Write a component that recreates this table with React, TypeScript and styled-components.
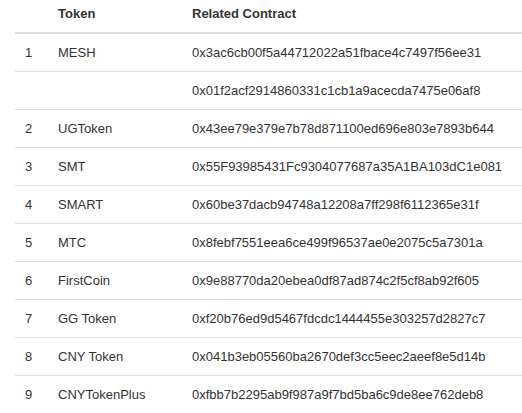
import React from "react";
import styled, { createGlobalStyle } from "styled-components";

const Global = createGlobalStyle`
  html, body { margin: 0; padding: 0; background: #fff; }
  body {
    font-family: "Liberation Sans", Arial, sans-serif;
    font-size: 13px;
    color: #333;
  }
`;

const Page = styled.div`
  padding-left: 15px;
  overflow: hidden;
`;

const Table = styled.table`
  width: 100%;
  table-layout: fixed;
  border-collapse: collapse;
  border-spacing: 0;
`;

const Th = styled.th<{ $w?: number }>`
  text-align: left;
  font-weight: bold;
  line-height: 21px;
  padding: 3px 8px 8px;
  border-bottom: 2px solid #ddd;
  white-space: nowrap;
  width: ${(p) => (p.$w ? `${p.$w}px` : "auto")};
  box-sizing: border-box;
`;

const Td = styled.td<{ $num?: boolean }>`
  line-height: 21px;
  padding: 8px 8px 8px ${(p) => (p.$num ? "10px" : "8px")};
  border-top: 1px solid #ddd;
  white-space: nowrap;
`;

const rows: [string, string, string][] = [
  ["1", "MESH", "0x3ac6cb00f5a44712022a51fbace4c7497f56ee31"],
  ["", "", "0x01f2acf2914860331c1cb1a9acecda7475e06af8"],
  ["2", "UGToken", "0x43ee79e379e7b78d871100ed696e803e7893b644"],
  ["3", "SMT", "0x55F93985431Fc9304077687a35A1BA103dC1e081"],
  ["4", "SMART", "0x60be37dacb94748a12208a7ff298f6112365e31f"],
  ["5", "MTC", "0x8febf7551eea6ce499f96537ae0e2075c5a7301a"],
  ["6", "FirstCoin", "0x9e88770da20ebea0df87ad874c2f5cf8ab92f605"],
  ["7", "GG Token", "0xf20b76ed9d5467fdcdc1444455e303257d2827c7"],
  ["8", "CNY Token", "0x041b3eb05560ba2670def3cc5eec2aeef8e5d14b"],
  ["9", "CNYTokenPlus", "0xfbb7b2295ab9f987a9f7bd5ba6c9de8ee762deb8"],
];

export default function App() {
  return (
    <>
      <Global />
      <Page>
        <Table>
          <thead>
            <tr>
              <Th $w={35}></Th>
              <Th $w={134}>Token</Th>
              <Th>Related Contract</Th>
            </tr>
          </thead>
          <tbody>
            {rows.map((r, i) => (
              <tr key={i}>
                <Td $num>{r[0]}</Td>
                <Td>{r[1]}</Td>
                <Td>{r[2]}</Td>
              </tr>
            ))}
          </tbody>
        </Table>
      </Page>
    </>
  );
}
